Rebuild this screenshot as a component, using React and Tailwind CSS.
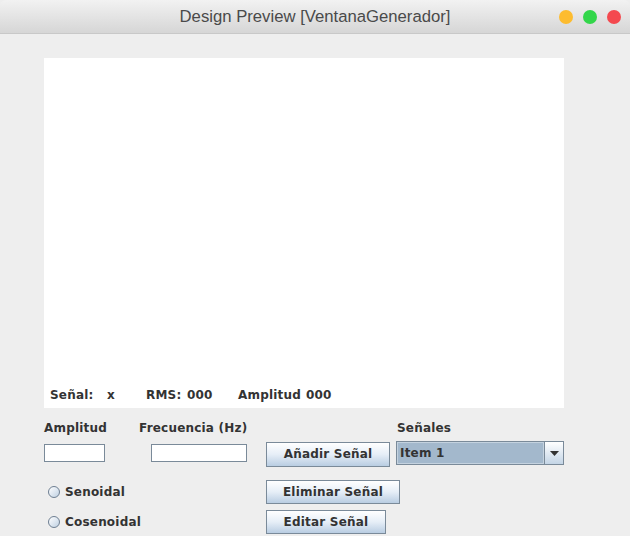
import { useState } from 'react';

const font = { fontFamily: '"DejaVu Sans", Verdana, sans-serif' };

function MetalButton({ children, w, h = 'h-[24px]' }) {
  return (
    <button
      className={`${h} ${w} border border-[#7a8a99] bg-gradient-to-b from-[#ffffff] via-[#e6eef7] to-[#b9cde2] text-[12px] font-bold tracking-[0.2px] text-[#333333]`}
    >
      {children}
    </button>
  );
}

function Radio({ label }) {
  return (
    <label className="flex items-center gap-[5px] pl-[4px] text-[12px] font-bold tracking-[0.2px] text-[#333333]">
      <span className="h-[12px] w-[12px] rounded-full border border-[#6e7f92] bg-gradient-to-br from-[#ffffff] to-[#bfd0e2]" />
      {label}
    </label>
  );
}

export default function App() {
  const [item] = useState('Item 1');

  return (
    <div className="h-[536px] w-[630px] overflow-hidden bg-[#eeeeee]" style={font}>
      {/* barra de título */}
      <div className="relative flex h-[34px] items-center justify-center rounded-t-[6px] border-b border-[#c8c8c8] bg-gradient-to-b from-[#f2f2f2] to-[#d6d6d6]">
        <span className="text-[16.7px] text-[#4a4a4a]" style={{ fontFamily: '"Liberation Sans", Arial, sans-serif' }}>
          Design Preview [VentanaGenerador]
        </span>
        <div className="absolute right-[9px] top-[10px] flex gap-[10px]">
          <span className="h-[14px] w-[14px] rounded-full bg-[#fdbc2f]" />
          <span className="h-[14px] w-[14px] rounded-full bg-[#33d64a]" />
          <span className="h-[14px] w-[14px] rounded-full bg-[#f4494f]" />
        </div>
      </div>

      <div className="pl-[44px] pt-[24px]">
        {/* panel de gráfica */}
        <div className="flex h-[350px] w-[520px] flex-col justify-end bg-white pb-[4px] pl-[6px] text-[12px] font-bold tracking-[0.2px] text-[#333333]">
          <div className="flex">
            <span className="w-[57px]">Señal:</span>
            <span className="w-[39px]">x</span>
            <span className="w-[41px]">RMS:</span>
            <span className="w-[51px]">000</span>
            <span className="w-[68px]">Amplitud</span>
            <span>000</span>
          </div>
        </div>

        {/* controles */}
        <div className="mt-[11px] flex text-[12px] font-bold tracking-[0.2px] text-[#333333]">
          <span className="w-[95px]">Amplitud</span>
          <span className="w-[258px]">Frecuencia (Hz)</span>
          <span>Señales</span>
        </div>

        <div className="mt-[4px] flex items-start">
          <input className="mt-[3px] h-[18px] w-[61px] border border-[#7a8a99] bg-white" />
          <input className="ml-[46px] mt-[3px] h-[18px] w-[96px] border border-[#7a8a99] bg-white" />
          <div className="ml-[19px]">
            <MetalButton w="w-[124px]" h="h-[25px]">Añadir Señal</MetalButton>
          </div>
          <div className="ml-[6px] flex h-[24px] w-[168px] border border-[#7a8a99]">
            <div className="flex flex-1 items-center border border-[#c4d2df] bg-[#a3b8cc] pl-[2px] text-[12px] font-bold tracking-[0.2px] text-[#333333]">
              {item}
            </div>
            <div className="flex w-[19px] items-center justify-center border-l border-[#7a8a99] bg-gradient-to-b from-[#ffffff] to-[#c4d5e6]">
              <svg width="9" height="5" viewBox="0 0 9 5">
                <path d="M0 0h9L4.5 5z" fill="#333333" />
              </svg>
            </div>
          </div>
        </div>

        <div className="mt-[13px] flex items-center">
          <div className="w-[222px]">
            <Radio label="Senoidal" />
          </div>
          <MetalButton w="w-[134px]">Eliminar Señal</MetalButton>
        </div>

        <div className="mt-[6px] flex items-center">
          <div className="w-[222px]">
            <Radio label="Cosenoidal" />
          </div>
          <MetalButton w="w-[120px]">Editar Señal</MetalButton>
        </div>
      </div>
    </div>
  );
}
